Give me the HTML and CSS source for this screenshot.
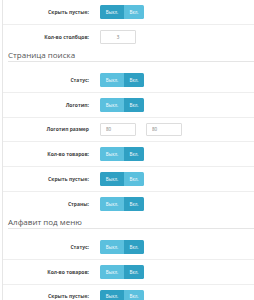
FILE: index.html
```html
<!DOCTYPE html>
<html lang="ru">
<head>
    <meta charset="UTF-8">
    <meta name="viewport" content="width=device-width, initial-scale=1.0">
    <title>Настройки модуля</title>
    <link rel="stylesheet" href="styles.css">
</head>
<body>
    <div class="panel">
        <!-- Общие -->
        <div class="fieldset">
            <div class="form-group">
                <label>Скрыть пустые:</label>
                <div class="btn-group">
                    <span class="btn active">Выкл.</span>
                    <span class="btn">Вкл.</span>
                </div>
            </div>
            <div class="form-group">
                <label>Кол-во столбцов:</label>
                <input class="form-control center" type="text" value="3">
            </div>
        </div>

        <!-- Страница поиска -->
        <div class="fieldset">
            <div class="legend">Страница поиска</div>
            <div class="form-group">
                <label>Статус:</label>
                <div class="btn-group">
                    <span class="btn">Выкл.</span>
                    <span class="btn active">Вкл.</span>
                </div>
            </div>
            <div class="form-group">
                <label>Логотип:</label>
                <div class="btn-group">
                    <span class="btn">Выкл.</span>
                    <span class="btn active">Вкл.</span>
                </div>
            </div>
            <div class="form-group">
                <label>Логотип размер</label>
                <div class="inputs">
                    <input class="form-control" type="text" value="80">
                    <input class="form-control" type="text" value="80">
                </div>
            </div>
            <div class="form-group">
                <label>Кол-во товаров:</label>
                <div class="btn-group">
                    <span class="btn">Выкл.</span>
                    <span class="btn active">Вкл.</span>
                </div>
            </div>
            <div class="form-group">
                <label>Скрыть пустые:</label>
                <div class="btn-group">
                    <span class="btn active">Выкл.</span>
                    <span class="btn">Вкл.</span>
                </div>
            </div>
            <div class="form-group">
                <label>Страны:</label>
                <div class="btn-group">
                    <span class="btn">Выкл.</span>
                    <span class="btn active">Вкл.</span>
                </div>
            </div>
        </div>

        <!-- Алфавит под меню -->
        <div class="fieldset">
            <div class="legend">Алфавит под меню</div>
            <div class="form-group">
                <label>Статус:</label>
                <div class="btn-group">
                    <span class="btn">Выкл.</span>
                    <span class="btn active">Вкл.</span>
                </div>
            </div>
            <div class="form-group">
                <label>Кол-во товаров:</label>
                <div class="btn-group">
                    <span class="btn">Выкл.</span>
                    <span class="btn active">Вкл.</span>
                </div>
            </div>
            <div class="form-group">
                <label>Скрыть пустые:</label>
                <div class="btn-group">
                    <span class="btn active">Выкл.</span>
                    <span class="btn">Вкл.</span>
                </div>
            </div>
        </div>
    </div>
</body>
</html>
```

FILE: styles.css
```css
:root {
    --info-color: #5bc0de;
    --info-active: #2fa0c3;
    --line-color: #eeeeee;
    --text-color: #333333;
}

body {
    font-family: 'Open Sans', 'Liberation Sans', sans-serif;
    margin: 0;
    background-color: #ffffff;
    color: var(--text-color);
}

.panel {
    margin-left: 2px;
    border-left: 1px solid #e6e6e6;
    min-height: 300px;
}

.legend {
    margin-left: 5px;
    font-size: 8px;
    line-height: 11px;
    color: #555555;
    padding-bottom: 1px;
    border-bottom: 1px solid #e5e5e5;
    margin-bottom: 6.5px;
}

.form-group {
    display: flex;
    align-items: center;
    padding: 5px 0;
}

.form-group + .form-group {
    border-top: 1px solid var(--line-color);
}

.form-group label {
    flex: 0 0 86px;
    margin-right: 11px;
    text-align: right;
    font-size: 5px;
    font-weight: bold;
    color: #444444;
}

.btn-group {
    display: flex;
    height: 13.75px;
    border-radius: 1.5px;
    overflow: hidden;
}

.btn {
    display: flex;
    align-items: center;
    justify-content: center;
    background-color: var(--info-color);
    color: #ffffff;
    font-size: 4.5px;
}

.btn:first-child {
    width: 24px;
}

.btn:last-child {
    width: 20px;
}

.btn.active {
    background-color: var(--info-active);
}

.inputs {
    display: flex;
    gap: 10px;
}

.form-control {
    box-sizing: border-box;
    width: 36px;
    height: 13.75px;
    margin: 0;
    padding: 0 5px;
    border: 1px solid #dddddd;
    border-radius: 1px;
    font-family: inherit;
    font-size: 4.5px;
    color: #777777;
    background: #ffffff;
}

.form-control.center {
    text-align: center;
}
```
